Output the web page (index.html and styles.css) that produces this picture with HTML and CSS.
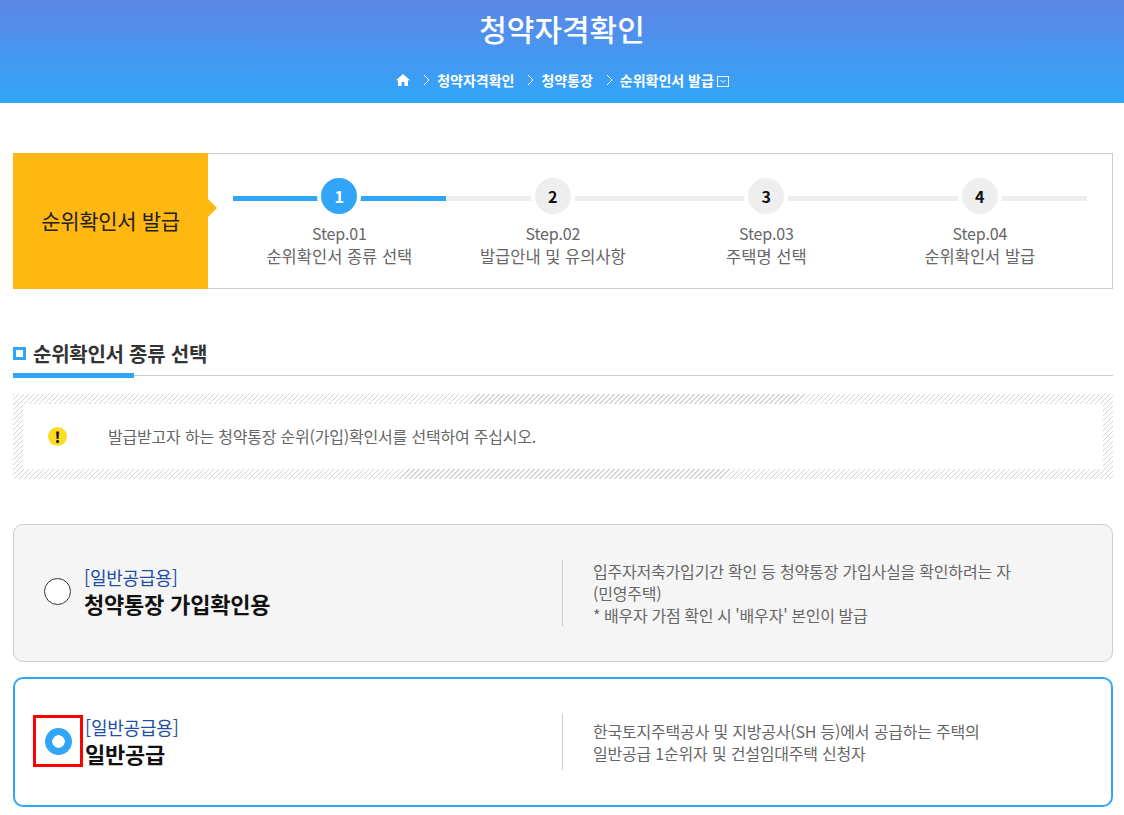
FILE: index.html
```html
<!DOCTYPE html>
<html lang="ko">
<head>
<meta charset="utf-8">
<title>청약자격확인</title>
<link rel="stylesheet" href="styles.css">
</head>
<body>
<header class="hero">
  <h1 class="hero-title">청약자격확인</h1>
  <nav class="crumbs">
    <svg class="home" viewBox="0 0 14 12" width="14" height="12"><path d="M7 0 0 6.2h2V12h3.600V8h2.800v4H12V6.200h2z" fill="#fff"/></svg>
    <span class="crumb"><svg class="chev" viewBox="0 0 7 12" width="7" height="12"><path d="M1 1l5 5-5 5" fill="none" stroke="#fff"/></svg>청약자격확인</span>
    <span class="crumb"><svg class="chev" viewBox="0 0 7 12" width="7" height="12"><path d="M1 1l5 5-5 5" fill="none" stroke="#fff"/></svg>청약통장</span>
    <span class="crumb"><svg class="chev" viewBox="0 0 7 12" width="7" height="12"><path d="M1 1l5 5-5 5" fill="none" stroke="#fff"/></svg>순위확인서 발급</span>
    <svg class="drop" viewBox="0 0 12 11" width="12" height="11"><rect x=".5" y=".5" width="11" height="10" fill="none" stroke="#fff"/><path d="M3.500 4l2.500 2.500L8.500 4" fill="none" stroke="#fff"/></svg>
  </nav>
</header>
<main class="content">
  <section class="stepbox">
    <div class="stepbox-label">순위확인서 발급</div>
    <ol class="steps">
      <li class="step active"><span class="num">1</span><span class="s1">Step.01</span><span class="s2">순위확인서 종류 선택</span></li>
      <li class="step"><span class="num">2</span><span class="s1">Step.02</span><span class="s2">발급안내 및 유의사항</span></li>
      <li class="step"><span class="num">3</span><span class="s1">Step.03</span><span class="s2">주택명 선택</span></li>
      <li class="step"><span class="num">4</span><span class="s1">Step.04</span><span class="s2">순위확인서 발급</span></li>
    </ol>
  </section>
  <h2 class="section-title"><span class="sq"></span>순위확인서 종류 선택</h2>
  <div class="notice">
    <div class="notice-inner">
      <span class="warn">!</span>
      <p>발급받고자 하는 청약통장 순위(가입)확인서를 선택하여 주십시오.</p>
    </div>
  </div>
  <label class="card card-off">
    <span class="radio-wrap"><span class="radio"></span></span>
    <span class="names"><span class="tag">[일반공급용]</span><strong>청약통장 가입확인용</strong></span>
    <span class="desc">입주자저축가입기간 확인 등 청약통장 가입사실을 확인하려는 자<br>(민영주택)<br><span class="tight">* 배우자 가점 확인 시 '배우자' 본인이 발급</span></span>
  </label>
  <label class="card card-on">
    <span class="radio-wrap focus"><span class="radio checked"></span></span>
    <span class="names"><span class="tag">[일반공급용]</span><strong>일반공급</strong></span>
    <span class="desc">한국토지주택공사 및 지방공사(SH 등)에서 공급하는 주택의<br>일반공급 1순위자 및 건설임대주택 신청자</span>
  </label>
</main>
</body>
</html>
```
FILE: styles.css
```css
* { box-sizing: border-box; }
html, body { margin: 0; padding: 0; }
body { font-family: "Noto Sans CJK KR", "Noto Sans", sans-serif; color: #555; background: #fff; overflow: hidden; height: 815px; }
.hero { height: 103px; background: linear-gradient(#5d86e6, #31a6f9); color: #fff; text-align: center; }
.hero-title { margin: 0; padding-top: 7px; font-size: 30px; line-height: 42px; font-weight: 500; }
.crumbs { display: flex; justify-content: center; align-items: center; gap: 13px; height: 20px; margin-top: 21px; padding-left: 1px; font-size: 14px; font-weight: 700; letter-spacing: -0.02px; }
.crumb { display: inline-flex; align-items: center; }
.chev { margin-right: 7px; }
.drop { margin-left: -10px; margin-top: 2px; }
.content { padding: 50px 11px 0 13px; }
.stepbox { display: flex; height: 136px; border: 1px solid #ccc; border-left: 0; }
.stepbox-label { position: relative; width: 195px; margin: -1px 0; padding-bottom: 2px; background: #ffb812; color: #222; font-size: 21px; display: flex; align-items: center; justify-content: center; letter-spacing: -0.3px; }
.stepbox-label::after { content: ""; position: absolute; left: 100%; top: 46px; border: 9px solid transparent; border-left-color: #ffb812; border-right: 0; }
.steps { list-style: none; display: grid; grid-template-columns: repeat(4, 213.5px); margin: 0; padding: 24px 0 0 24.6px; }
.step { position: relative; display: flex; flex-direction: column; align-items: center; }
.step::before { content: ""; position: absolute; left: 0; right: 0; top: 18px; height: 5px; background: #eee; }
.step.active::before { background: #31a6f9; }
.num { position: relative; width: 44px; height: 44px; margin-top: -4px; border: 4px solid #fff; border-radius: 50%; background: #eee; color: #111; font-size: 16px; font-weight: 700; display: flex; align-items: center; justify-content: center; }
.active .num { background: #31a6f9; color: #fff; }
.s1, .s2 { line-height: 23px; color: #666; }
.s1 { margin-top: 4px; font-size: 16px; letter-spacing: -0.2px; }
.s2 { font-size: 16.5px; }
.section-title { display: flex; align-items: center; height: 87px; margin: 0; padding-top: 42px; font-size: 20px; font-weight: 700; color: #333; letter-spacing: -0.25px; border-bottom: 1px solid #ccc; position: relative; }
.section-title::after { content: ""; position: absolute; left: 0; bottom: -3px; width: 121px; height: 5px; background: #31a6f9; }
.sq { width: 13px; height: 13px; border: 3px solid #31a6f9; margin-right: 7px; }
.notice { margin-top: 18px; height: 85px; padding: 10px; background: repeating-linear-gradient(135deg, #d4d4d4 0 1px, #fff 1px 3.54px); }
.notice-inner { height: 65px; background: #fff; display: flex; align-items: center; padding-left: 25px; }
.warn { width: 19px; height: 19px; border-radius: 50%; background: #fddc25; color: #111; font-size: 15px; font-weight: 900; line-height: 19px; text-align: center; }
.notice p { margin: 0 0 2px 41px; font-size: 16px; color: #666; letter-spacing: -0.2px; }
.card { display: flex; align-items: center; border-radius: 10px; }
.card-off { margin-top: 45px; height: 138px; border: 1px solid #ccc; background: #f5f5f5; padding-left: 29px; }
.card-on { margin-top: 15px; height: 130px; border: 2px solid #31a6f9; background: #fff; padding-left: 18px; }
.radio-wrap { display: flex; align-items: center; justify-content: center; flex: none; width: 28px; height: 28px; margin-right: 13px; margin-bottom: 4px; }
.radio-wrap.focus { width: 50px; height: 52px; margin-right: 2px; margin-bottom: 2px; border: 3px solid #f00; }
.radio { width: 27px; height: 27px; border-radius: 50%; border: 1px solid #333; background: #fff; }
.radio.checked { border: 0; background: radial-gradient(circle, #fff 6px, #31a6f9 6.5px); }
.names { display: flex; flex-direction: column; flex: none; width: 478px; margin-bottom: 4px; }
.card-on .names { width: 477px; margin-bottom: 2px; }
.tag { font-size: 18px; line-height: 24px; color: #1f4fa8; letter-spacing: -0.2px; }
.names strong { font-size: 22px; line-height: 28px; color: #111; font-weight: 700; letter-spacing: -0.2px; }
.desc { display: block; padding: 0 0 0 30px; border-left: 1px solid #ccc; font-size: 16px; line-height: 22px; color: #666; letter-spacing: -0.2px; }
.tight { word-spacing: -0.5px; }
.card-on .desc { padding-top: 6px; padding-bottom: 6px; }
```
